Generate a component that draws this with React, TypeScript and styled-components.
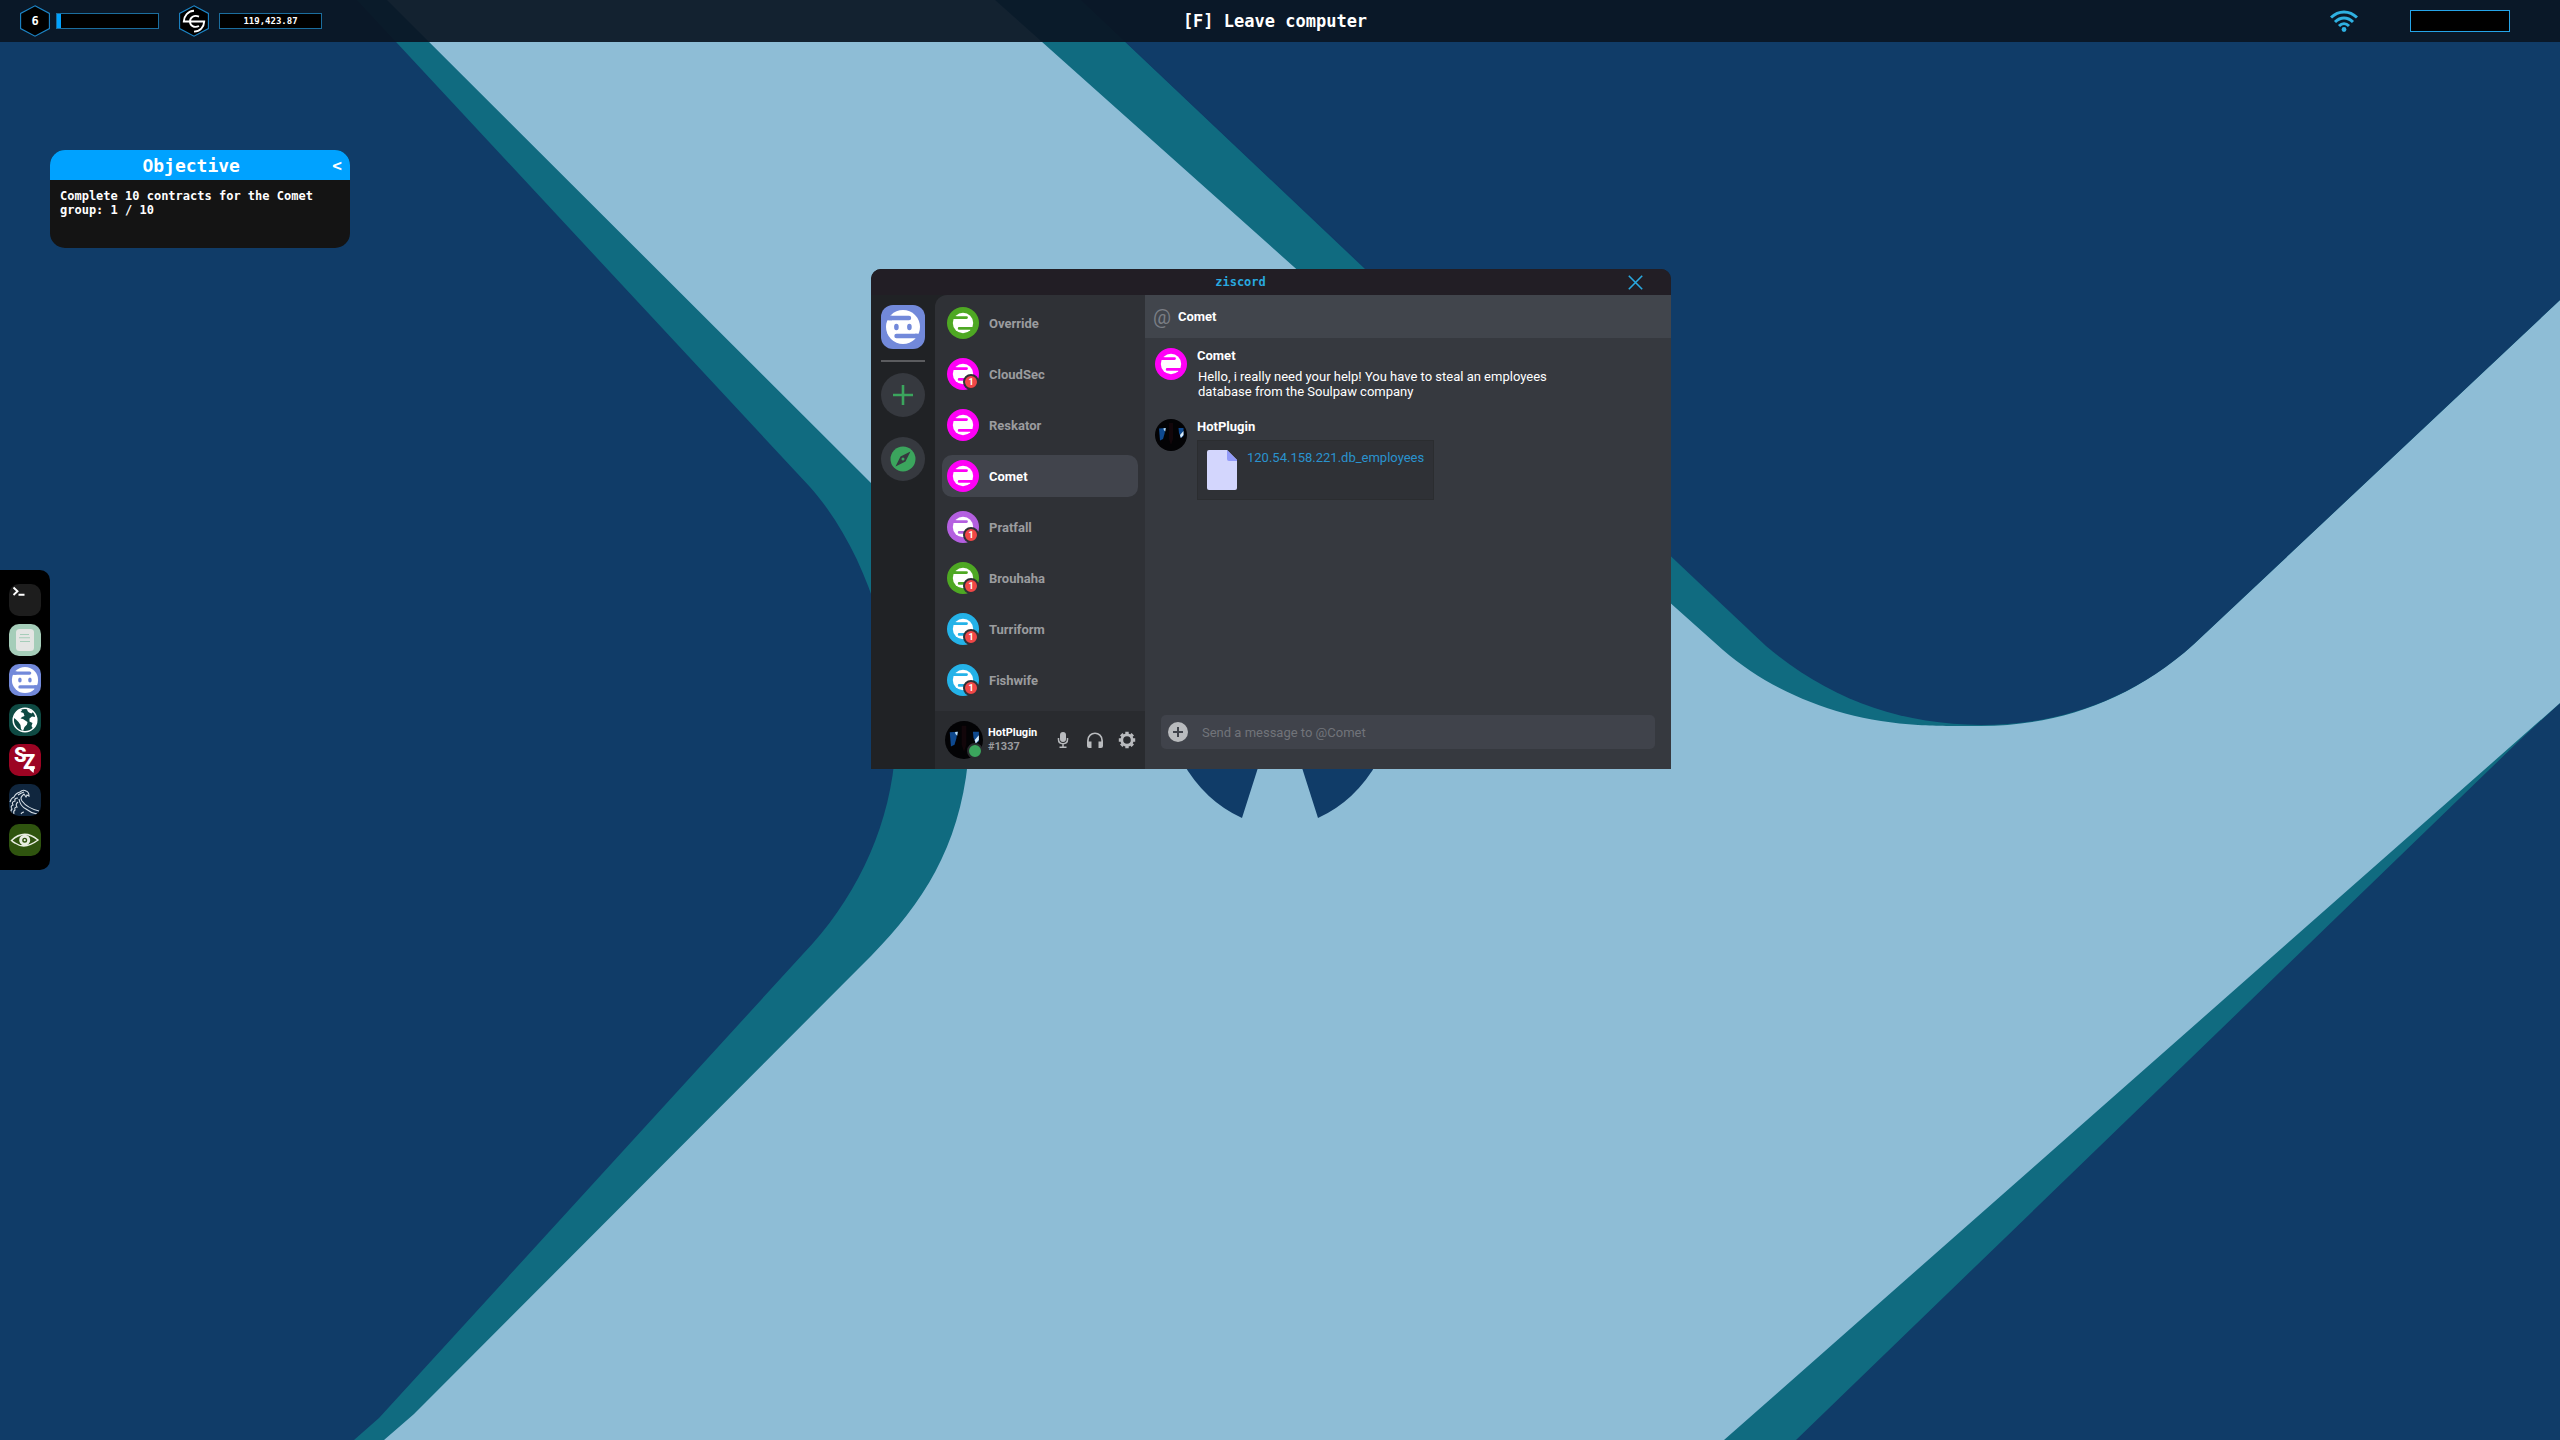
import React from 'react';
import styled, { createGlobalStyle } from 'styled-components';

const mono = `"DejaVu Sans Mono", "Liberation Mono", monospace`;
const sans = `Roboto, "Liberation Sans", sans-serif`;

const GlobalStyle = createGlobalStyle`
  *, *::before, *::after { box-sizing: border-box; }
  body { margin: 0; background: #103c68; }
  button, input { font: inherit; color: inherit; }
  button { padding: 0; border: 0; background: none; cursor: pointer; }
  h1, h2, p, ul, ol { margin: 0; padding: 0; font-size: inherit; font-weight: inherit; }
  ul, ol { list-style: none; }
  svg { display: block; }
`;

/* ---------- desktop ---------- */

const Desktop = styled.div`
  position: relative;
  min-height: 100vh;
  overflow: hidden;
  color: #fff;
  font-family: ${sans};
`;

const Wallpaper = styled.svg`
  position: absolute;
  inset: 0;
  width: 100%;
  height: 100%;
`;

const TopBar = styled.header`
  position: relative;
  display: grid;
  grid-template-columns: 1fr auto 1fr;
  align-items: center;
  height: 42px;
  padding: 0 50px 0 20px;
  background: rgba(10, 22, 36, 0.93);
  font-family: ${mono};
  font-weight: 700;
`;

const Stats = styled.div`
  display: flex;
  align-items: center;
  gap: 20px;
`;

const Stat = styled.div<{ $gap: number }>`
  display: flex;
  align-items: center;
  gap: ${(p) => p.$gap}px;
`;

const HexBadge = styled.div`
  display: grid;
  place-items: center;
  width: 30px;
  height: 32px;
  font-size: 12px;

  > * { grid-area: 1 / 1; }
  > span { position: relative; }
`;

const Meter = styled.div`
  display: flex;
  align-items: center;
  justify-content: center;
  width: 103px;
  height: 16px;
  border: 1px solid #1b6d9e;
  background: #000;
  font-size: 9px;
`;

const MeterFill = styled.div`
  width: 4px;
  height: 100%;
  margin-right: auto;
  background: #00a2ff;
`;

const LeaveButton = styled.button`
  padding: 0 0 0 20px;
  font-size: 17px;
`;

const Tray = styled.div`
  display: flex;
  align-items: center;
  justify-content: flex-end;
  gap: 52px;
`;

const Battery = styled.div`
  width: 100px;
  height: 22px;
  border: 1px solid #25a4e8;
  background: #000;
`;

const Objective = styled.section`
  position: absolute;
  left: 50px;
  top: 150px;
  width: 300px;
  min-height: 98px;
  border-radius: 15px;
  overflow: hidden;
  background: #141414;
  font-family: ${mono};
  font-weight: 700;
`;

const ObjectiveHead = styled.div`
  display: flex;
  align-items: center;
  height: 30px;
  padding-right: 8px;
  background: #00a2ff;

  h2 { flex: 1; text-align: center; font-size: 18px; }
  button { font-size: 16px; }
`;

const ObjectiveText = styled.p`
  padding: 9px 10px;
  font-size: 12px;
  line-height: 14px;
`;

const Dock = styled.nav`
  position: absolute;
  left: 0;
  top: 50%;
  display: flex;
  flex-direction: column;
  align-items: center;
  gap: 8px;
  width: 50px;
  padding: 14px 0;
  transform: translateY(-50%);
  border-radius: 0 10px 10px 0;
  background: #000;
`;

const DockButton = styled.button<{ $bg: string }>`
  width: 32px;
  height: 32px;
  border-radius: 10px;
  overflow: hidden;
  background: ${(p) => p.$bg};
`;

/* ---------- chat window ---------- */

const Window = styled.main`
  position: absolute;
  left: 871px;
  top: 269px;
  display: grid;
  grid-template-rows: 26px 1fr;
  width: 800px;
  height: 500px;
  border-radius: 10px 10px 0 0;
  overflow: hidden;
  background: #202225;
  font-size: 13px;
`;

const TitleBar = styled.div`
  display: grid;
  grid-template-columns: 1fr 50px;
  align-items: center;
  justify-items: center;
  padding-right: 11px;
  background: #221e25;
  color: #29a8df;

  h1 {
    font-family: ${mono};
    font-size: 12px;
    font-weight: 700;
  }
`;

const Columns = styled.div`
  display: grid;
  grid-template-columns: 64px 210px 1fr;
  min-height: 0;
`;

const Rail = styled.nav`
  display: flex;
  flex-direction: column;
  align-items: center;
  gap: 20px;
  padding-top: 10px;
  background: #202225;
`;

const RailHome = styled.div`
  display: flex;
  flex-direction: column;
  gap: 11px;
  margin-bottom: -9px;
`;

const RailLine = styled.hr`
  width: 44px;
  height: 2px;
  margin: 0;
  border: 0;
  background: #5b5c5f;
`;

const RailButton = styled.button<{ $home?: boolean }>`
  display: grid;
  place-items: center;
  width: 44px;
  height: 44px;
  border-radius: ${(p) => (p.$home ? '12px' : '50%')};
  background: ${(p) => (p.$home ? '#7289da' : '#36393f')};
`;

const Sidebar = styled.div`
  display: flex;
  flex-direction: column;
  justify-content: space-between;
  border-top-left-radius: 12px;
  overflow: hidden;
  background: #2f3136;
`;

const ContactList = styled.ul`
  display: flex;
  flex-direction: column;
  gap: 9px;
  padding: 7px;
`;

const Contact = styled.button<{ $active: boolean }>`
  display: flex;
  align-items: center;
  gap: 10px;
  width: 100%;
  height: 42px;
  padding: 0 5px;
  border-radius: 10px;
  background: ${(p) => (p.$active ? '#41444c' : 'transparent')};
  color: ${(p) => (p.$active ? '#fff' : '#9b9c9f')};
  font-weight: 700;
`;

const AvatarBox = styled.span<{ $size: number }>`
  position: relative;
  flex: none;
  width: ${(p) => p.$size}px;
  height: ${(p) => p.$size}px;
`;

const Unread = styled.span`
  position: absolute;
  right: 0;
  bottom: 0;
  width: 16px;
  height: 16px;
  border: 2px solid #2f3136;
  border-radius: 50%;
  background: #f04747;
  color: #fff;
  font-size: 9px;
  line-height: 12px;
  text-align: center;
`;

const Online = styled.span`
  position: absolute;
  right: 0;
  bottom: 0;
  width: 16px;
  height: 16px;
  border: 2px solid #292b2f;
  border-radius: 50%;
  background: #3ba55d;
`;

const UserPanel = styled.div`
  display: flex;
  align-items: center;
  gap: 5px;
  height: 58px;
  padding: 0 9px 0 10px;
  background: #292b2f;
`;

const UserName = styled.div`
  flex: 1;
  font-size: 11px;
  font-weight: 700;
  line-height: 14px;

  p { color: #9b9c9f; }
`;

const UserTools = styled.div`
  display: flex;
  gap: 14px;
  color: #b9bbbe;
`;

const Chat = styled.section`
  display: flex;
  flex-direction: column;
  min-width: 0;
  background: #36393f;
`;

const ChatHead = styled.div`
  display: flex;
  align-items: center;
  gap: 7px;
  height: 43px;
  padding-left: 8px;
  background: #41454c;
  font-weight: 700;

  span { color: #7a7e85; font-size: 20px; font-weight: 400; line-height: 20px; }
`;

const Messages = styled.ol`
  display: flex;
  flex: 1;
  flex-direction: column;
  gap: 20px;
  padding: 10px;
`;

const Message = styled.li`
  display: grid;
  grid-template-columns: 32px 1fr;
  gap: 10px;
  min-height: 51px;
`;

const MessageBody = styled.div`
  display: flex;
  flex-direction: column;
  align-items: flex-start;
  gap: 5px;
`;

const Author = styled.h2`
  font-weight: 700;
  line-height: 16px;
`;

const Text = styled.p`
  max-width: 360px;
  padding-left: 1px;
  line-height: 15px;
`;

const FileCard = styled.a`
  display: flex;
  gap: 10px;
  height: 60px;
  padding: 9px;
  border: 1px solid #2b2d30;
  background: #2f3136;
  color: #2a93cf;
  line-height: 16px;
  text-decoration: none;
`;

const Composer = styled.form`
  display: flex;
  align-items: center;
  gap: 14px;
  height: 34px;
  margin: 0 16px 20px;
  padding: 0 7px;
  border-radius: 5px;
  background: #40434b;

  input {
    flex: 1;
    min-width: 0;
    padding: 0;
    border: 0;
    outline: 0;
    background: none;
    font-size: 13px;
  }
  input::placeholder { color: #71747a; opacity: 1; }
`;

/* ---------- drawings ---------- */

const WallpaperArt = () => (
  <Wallpaper viewBox="0 0 2560 1440" preserveAspectRatio="xMidYMid slice" aria-hidden="true">
    <rect width="2560" height="1440" fill="#103c68" />
    <path
      fill="#106b80"
      d="M357 0L810 487C866 550 896 650 896 730C896 815 860 895 803 954L379 1418L354 1440H1796L2521 739L2560 703V300L1365 269L1081 0Z"
    />
    <path
      fill="#8ebdd6"
      d="M387 0L871 483C930 545 970 640 970 720C970 830 930 896 872 955L414 1414L384 1440H1724L2560 703V300L2194 644C2130 702 2055 726 1981 726C1950 726 1940 726 1918 725C1845 721 1775 695 1723 650L995 0Z"
    />
    <path
      fill="#103c68"
      d="M2560 0V300L2194 644C2130 702 2055 725 1981 725C1900 724 1830 700 1766 646L1081 0Z"
    />
    <path fill="#103c68" d="M1168 730Q1191 795 1242 818L1270 730ZM1290 730L1318 818Q1369 795 1392 730Z" />
  </Wallpaper>
);

const Hexagon = () => (
  <svg width="30" height="32" viewBox="0 0 30 32" aria-hidden="true">
    <path d="M15 .8L29.4 8.4V23.6L15 31.2L.6 23.6V8.4Z" fill="#000" stroke="#1d86c8" strokeWidth="1.1" />
  </svg>
);

const CoinMark = () => (
  <svg width="30" height="32" viewBox="0 0 30 32" fill="none" stroke="#fff" strokeWidth="1.9" aria-hidden="true">
    <path d="M15 5.8C9 6 5 11 4.8 16.5H25.2C25 22 21 26.5 15 26.6" />
    <path d="M20 11.6C15 9.500 11 12.5 11 16.5C11 20.5 15 23.3 20 21" />
  </svg>
);

const Wifi = () => (
  <svg width="28" height="22" viewBox="0 0 28 22" fill="none" stroke="#2fb1e2" strokeWidth="3" aria-label="Wi-Fi">
    <path d="M1 7.500C8.5 0 19.5 0 27 7.500M5 12C10.5 6.600 17.5 6.600 23 12M9 16C12 13 16 13 19 16" />
    <circle cx="14" cy="19.5" r="2.4" fill="#2fb1e2" stroke="none" />
  </svg>
);

const Face = ({ size, bg, r = 17, eyes = false }: { size: number; bg: string; r?: number; eyes?: boolean }) => (
  <svg width={size} height={size} viewBox="0 0 44 44" aria-hidden="true">
    <g transform={`translate(22 22) scale(${r / 17})`}>
      <circle r="17" fill="#fff" />
      <path d="M-18-11.3H-11V-6.7H-18ZM18 6.700H12V11.300H18Z" fill={bg} />
      <path d="M-14-9H6M-6.5 9H14" stroke={bg} strokeWidth="4.4" strokeLinecap="round" />
      {eyes && (
        <g fill={bg}>
          <ellipse cx="-6.6" cy="0" rx="2.3" ry="3.3" />
          <ellipse cx="6.4" cy="0" rx="2.3" ry="3.3" />
        </g>
      )}
    </g>
  </svg>
);

const RoundFace = styled.span<{ $bg: string }>`
  display: block;
  border-radius: 50%;
  background: ${(p) => p.$bg};
`;

const FaceAvatar = ({ color }: { color: string }) => (
  <RoundFace $bg={color}>
    <Face size={32} bg={color} r={14} />
  </RoundFace>
);

const HackerAvatar = ({ size }: { size: number }) => (
  <svg width={size} height={size} viewBox="0 0 32 32" aria-hidden="true">
    <circle cx="16" cy="16" r="16" fill="#030305" />
    <path d="M14 4H18V20L16 26L14 20Z" fill="#12060a" />
    <path d="M4 9.5L10.5 9L9.5 15L8 20L5 21.5Z" fill="#0e498f" />
    <path d="M8.5 9.2L10.8 9L10.3 12.5L8.8 11Z" fill="#b9dcf5" />
    <path d="M23.5 9H28.5V17L26 19L24 14Z" fill="#0e498f" />
    <path d="M28.5 12L25 16L25.8 19L28.5 16Z" fill="#d8ecfa" />
  </svg>
);

const CloseIcon = () => (
  <svg width="15" height="15" viewBox="0 0 15 15" stroke="#29a8df" strokeWidth="1.6" aria-hidden="true">
    <path d="M.8.8L14.2 14.2M14.2.8L.8 14.2" />
  </svg>
);

const PlusIcon = () => (
  <svg width="20" height="20" viewBox="0 0 20 20" stroke="#3ba55d" strokeWidth="2.6" aria-hidden="true">
    <path d="M10 0V20M0 10H20" />
  </svg>
);

const CompassIcon = () => (
  <svg width="26" height="26" viewBox="0 0 26 26" aria-hidden="true">
    <circle cx="13" cy="13" r="12.5" fill="#3ba55d" />
    <path d="M20.5 5.5L15.5 15.5L5.5 20.5L10.5 10.5Z" fill="#36393f" />
    <circle cx="13" cy="13" r="1.5" fill="#3ba55d" />
  </svg>
);

const MicIcon = () => (
  <svg width="18" height="18" viewBox="0 0 18 18" fill="none" stroke="currentColor" strokeWidth="1.5" aria-hidden="true">
    <rect x="6" y="1" width="6" height="10" rx="3" fill="currentColor" stroke="none" />
    <path d="M4.500 7V8.500C4.500 14 13.500 14 13.500 8.500V7M9 12.500V16M5.500 16.200H12.500" />
  </svg>
);

const HeadphonesIcon = () => (
  <svg width="18" height="18" viewBox="0 0 18 18" fill="none" stroke="currentColor" strokeWidth="1.7" aria-hidden="true">
    <path d="M1.9 14V9.5C1.9-.2 16.1-.2 16.1 9.5V14" />
    <path d="M1 10.5H5.5V17H3Q1 17 1 15ZM17 10.5H12.5V17H15Q17 17 17 15Z" fill="currentColor" stroke="none" />
  </svg>
);

const GearIcon = () => (
  <svg width="18" height="18" viewBox="0 0 18 18" fill="none" stroke="currentColor" aria-hidden="true">
    <circle cx="9" cy="9" r="5.2" strokeWidth="2.8" />
    {[0, 45, 90, 135].map((a) => (
      <path key={a} d="M9 .8V3M9 15V17.2" strokeWidth="3.4" transform={`rotate(${a} 9 9)`} />
    ))}
  </svg>
);

const FileIcon = () => (
  <svg width="30" height="40" viewBox="0 0 30 40" aria-hidden="true">
    <path d="M2 0H20L30 10V38Q30 40 28 40H2Q0 40 0 38V2Q0 0 2 0Z" fill="#d3d6fd" />
    <path d="M20 0L30 10V11H22Q20 11 20 9Z" fill="#939bf9" />
  </svg>
);

const AttachIcon = () => (
  <svg width="20" height="20" viewBox="0 0 20 20" aria-hidden="true">
    <circle cx="10" cy="10" r="10" fill="#b9bbbe" />
    <path d="M10 5V15M5 10H15" stroke="#40434b" strokeWidth="2" />
  </svg>
);

const TerminalArt = () => (
  <svg width="32" height="32" viewBox="0 0 32 32" fill="none" stroke="#fff" strokeWidth="1.9" aria-hidden="true">
    <path d="M4.5 3.5L8.5 7.2L4.5 11M9.500 10.8H15.5" />
  </svg>
);

const NotesArt = () => (
  <svg width="32" height="32" viewBox="0 0 32 32" aria-hidden="true">
    <rect x="7" y="5" width="18" height="22" rx="3.5" fill="#e3e5e3" />
    <path d="M11 10.5H20M10 13.8H21M11 17.5H21" stroke="#a5cdb9" strokeWidth="1.1" />
  </svg>
);

const GlobeArt = () => (
  <svg width="32" height="32" viewBox="0 0 32 32" aria-hidden="true">
    <circle cx="16" cy="16" r="11.8" fill="none" stroke="#fff" strokeWidth="1.5" />
    <path
      fill="#fff"
      d="M5 12Q7 6.500 12 5L13 6.500L11.500 8L14.500 9L15.500 12L13 13L11.500 14.500L14 15L18.500 18L18 20.500L15.500 23L14 27L12 25L11.500 21L9.500 18L7 15.500L5 14ZM18 4.500L24.500 7.500L22.500 9.500L20 8.500L18.500 7ZM25.500 9L28 15L27 20L24 24.500L22.500 22L23.500 19L20.500 17.500V14.500L23 12.500L26 13Z"
    />
  </svg>
);

const SzArt = () => (
  <svg width="32" height="32" viewBox="0 0 32 32" fill="#fff" fontFamily={sans} fontWeight="900" aria-hidden="true">
    <text x="5" y="18" fontSize="20">S</text>
    <text x="14" y="25" fontSize="20">Z</text>
    <path d="M21 22.500H25.500L24.500 29L20.500 25.500Z" />
  </svg>
);

const WaveArt = () => (
  <svg width="32" height="32" viewBox="0 0 32 32" fill="none" stroke="#d5dde4" strokeWidth="1.1" aria-hidden="true">
    <path d="M1 18Q2 14 5 13Q7 9 11 8Q14 5 17 7Q20 8 20 12L18 11L17 13L15 10L13 12Q11 14 13 17Q18 24 30 27" />
    <path d="M2 30Q1 27 3 25Q1 22 4 21Q2 18 6 17Q5 14 9 14M5 30Q4 27 6 26Q5 23 8 23Q6 20 9 18" />
    <path d="M10 15Q11 22 17 25Q22 29 28 30M9 11Q12 9 15 8M12 30Q13 28 15 28" />
  </svg>
);

const EyeArt = () => (
  <svg width="32" height="32" viewBox="0 0 32 32" fill="none" stroke="#e9eee2" aria-hidden="true">
    <path d="M2.5 16.5Q15 4.5 29 16Q16 26 6 19Q4 18 2.5 16.5Z" strokeWidth="1.5" />
    <circle cx="15.7" cy="16.2" r="4" strokeWidth="3" />
    <circle cx="15.7" cy="16.2" r="1.1" fill="#e9eee2" stroke="none" />
  </svg>
);

/* ---------- data ---------- */

const apps = [
  { name: 'Terminal', bg: '#1d1d1d', art: <TerminalArt /> },
  { name: 'Notes', bg: '#a5cdb9', art: <NotesArt /> },
  { name: 'Ziscord', bg: '#7289da', art: <Face size={32} bg="#7289da" r={18} eyes /> },
  { name: 'Browser', bg: '#0e4a43', art: <GlobeArt /> },
  { name: 'SZ', bg: '#9c0423', art: <SzArt /> },
  { name: 'Wave', bg: '#10263e', art: <WaveArt /> },
  { name: 'Eye', bg: '#2f540f', art: <EyeArt /> },
];

const contacts = [
  { name: 'Override', color: '#4ea823', unread: 0 },
  { name: 'CloudSec', color: '#ff00f7', unread: 1 },
  { name: 'Reskator', color: '#ff00f7', unread: 0 },
  { name: 'Comet', color: '#ff00f7', unread: 0 },
  { name: 'Pratfall', color: '#b45fe0', unread: 1 },
  { name: 'Brouhaha', color: '#4ea823', unread: 1 },
  { name: 'Turriform', color: '#24b2e8', unread: 1 },
  { name: 'Fishwife', color: '#24b2e8', unread: 1 },
];

export default function App() {
  return (
    <Desktop>
      <GlobalStyle />
      <WallpaperArt />

      <TopBar>
        <Stats>
          <Stat $gap={6}>
            <HexBadge>
              <Hexagon />
              <span>6</span>
            </HexBadge>
            <Meter>
              <MeterFill />
            </Meter>
          </Stat>
          <Stat $gap={10}>
            <HexBadge>
              <Hexagon />
              <CoinMark />
            </HexBadge>
            <Meter>119,423.87</Meter>
          </Stat>
        </Stats>
        <LeaveButton type="button">[F] Leave computer</LeaveButton>
        <Tray>
          <Wifi />
          <Battery />
        </Tray>
      </TopBar>

      <Objective>
        <ObjectiveHead>
          <h2>Objective</h2>
          <button type="button">&lt;</button>
        </ObjectiveHead>
        <ObjectiveText>Complete 10 contracts for the Comet group: 1 / 10</ObjectiveText>
      </Objective>

      <Dock>
        {apps.map((app) => (
          <DockButton key={app.name} type="button" $bg={app.bg} aria-label={app.name}>
            {app.art}
          </DockButton>
        ))}
      </Dock>

      <Window>
        <TitleBar>
          <h1>ziscord</h1>
          <button type="button" aria-label="Close">
            <CloseIcon />
          </button>
        </TitleBar>
        <Columns>
          <Rail>
            <RailHome>
              <RailButton type="button" $home aria-label="Home">
                <Face size={44} bg="#7289da" eyes />
              </RailButton>
              <RailLine />
            </RailHome>
            <RailButton type="button" aria-label="Add a server">
              <PlusIcon />
            </RailButton>
            <RailButton type="button" aria-label="Explore">
              <CompassIcon />
            </RailButton>
          </Rail>

          <Sidebar>
            <ContactList>
              {contacts.map((c) => (
                <li key={c.name}>
                  <Contact type="button" $active={c.name === 'Comet'}>
                    <AvatarBox $size={32}>
                      <FaceAvatar color={c.color} />
                      {c.unread > 0 && <Unread>{c.unread}</Unread>}
                    </AvatarBox>
                    {c.name}
                  </Contact>
                </li>
              ))}
            </ContactList>
            <UserPanel>
              <AvatarBox $size={38}>
                <HackerAvatar size={38} />
                <Online />
              </AvatarBox>
              <UserName>
                <h2>HotPlugin</h2>
                <p>#1337</p>
              </UserName>
              <UserTools>
                <button type="button" aria-label="Microphone">
                  <MicIcon />
                </button>
                <button type="button" aria-label="Headphones">
                  <HeadphonesIcon />
                </button>
                <button type="button" aria-label="Settings">
                  <GearIcon />
                </button>
              </UserTools>
            </UserPanel>
          </Sidebar>

          <Chat>
            <ChatHead>
              <span>@</span>
              <h2>Comet</h2>
            </ChatHead>
            <Messages>
              <Message>
                <AvatarBox $size={32}>
                  <FaceAvatar color="#ff00f7" />
                </AvatarBox>
                <MessageBody>
                  <Author>Comet</Author>
                  <Text>
                    Hello, i really need your help! You have to steal an employees database from the Soulpaw company
                  </Text>
                </MessageBody>
              </Message>
              <Message>
                <AvatarBox $size={32}>
                  <HackerAvatar size={32} />
                </AvatarBox>
                <MessageBody>
                  <Author>HotPlugin</Author>
                  <FileCard href="#file">
                    <FileIcon />
                    120.54.158.221.db_employees
                  </FileCard>
                </MessageBody>
              </Message>
            </Messages>
            <Composer>
              <button type="button" aria-label="Attach a file">
                <AttachIcon />
              </button>
              <input type="text" aria-label="Message" placeholder="Send a message to @Comet" />
            </Composer>
          </Chat>
        </Columns>
      </Window>
    </Desktop>
  );
}
